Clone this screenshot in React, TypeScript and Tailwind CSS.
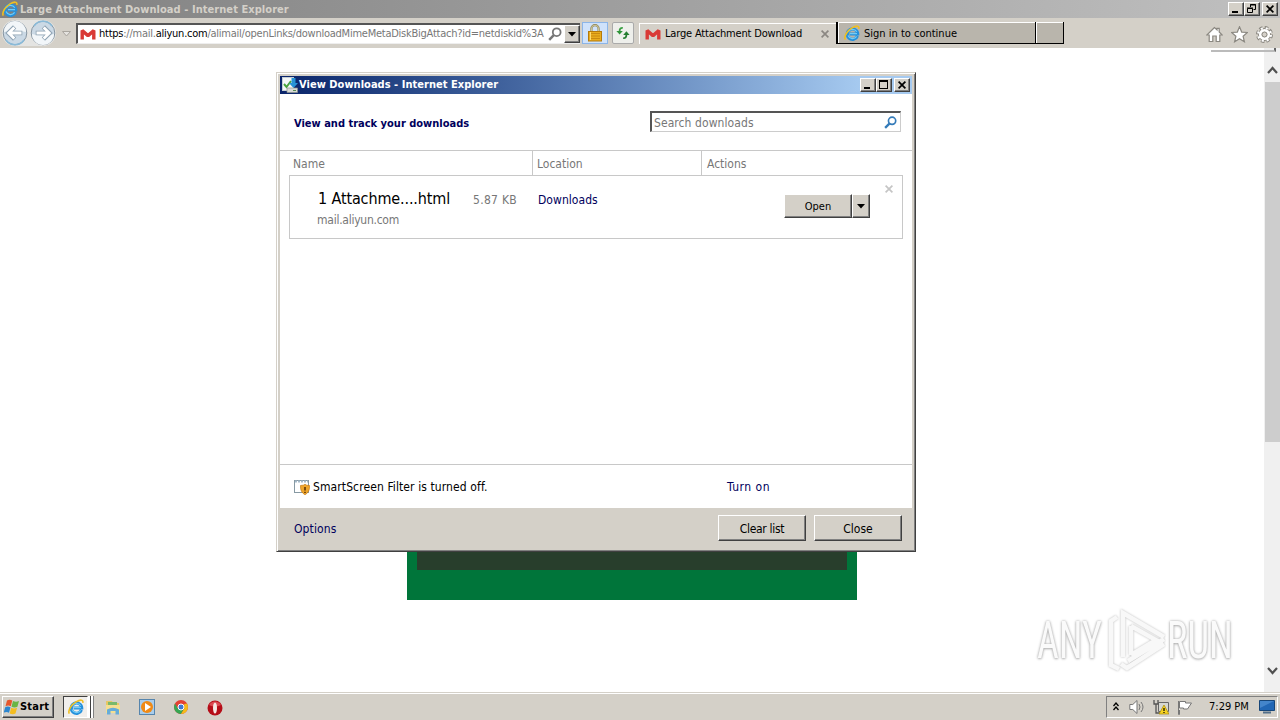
import React from 'react';

interface IconProps {
  className?: string;
}

const raised = 'bg-[#d4d0c8] border-t border-l border-t-white border-l-white border-r border-b border-r-[#404040] border-b-[#404040] shadow-[inset_-1px_-1px_0_#808080]';

const IeIcon = ({ className }: IconProps) => (
  <svg className={className} viewBox="0 0 16 16" fill="none">
    <path d="M13.4 10.9A5.200 5.200 0 1 1 13.7 9H5.600" stroke="#2590dc" strokeWidth="3.200" />
    <path d="M12.6 11.400A4.900 4.900 0 0 1 4 10.600M4.200 7A5 5 0 0 1 12.800 6.800M6 8.600h7" stroke="#72ccf6" strokeWidth="1.200" />
    <path d="M1.300 14.600C-.5 11.500 3.600 5.400 8 2.900 12 .6 15.500.3 14.800 3.800" stroke="#efbf22" strokeWidth="1.600" />
  </svg>
);

const MailIcon = ({ className }: IconProps) => (
  <svg className={className} viewBox="0 0 16 12" fill="none">
    <path d="M2.200 11.500V2.600L8 7.600l5.800-5v8.900" stroke="#d93a36" strokeWidth="3.400" strokeLinejoin="bevel" />
  </svg>
);

const NavArrow = ({ className }: IconProps) => (
  <svg className={className} viewBox="0 0 26 26" fill="none">
    <circle cx="13" cy="13" r="11.8" fill="#cbd9e5" stroke="#8795a1" />
    <path d="M2 12a11 11 0 0 1 22 0Q13 9 2 12Z" fill="#f2f6f9" />
    <path d="M4 20a11 11 0 0 0 18 0" stroke="#89bad8" strokeWidth="1.6" />
    <path d="M20.300 13H7.200M12.600 6.900 6.500 13l6.100 6.100" stroke="#8fa3b3" strokeWidth="4.600" />
    <path d="M19.500 13H7.400M12.300 7.400 6.700 13l5.600 5.600" stroke="#fff" strokeWidth="2.800" />
  </svg>
);

const Caret = ({ className }: IconProps) => (
  <svg className={className} viewBox="0 0 8 5">
    <path d="M0 0h8L4 4.5Z" fill="currentColor" />
  </svg>
);

const Magnifier = ({ className }: IconProps) => (
  <svg className={className} viewBox="0 0 14 14" fill="none" stroke="currentColor">
    <circle cx="8.7" cy="5.2" r="3.9" strokeWidth="1.8" />
    <path d="m5.8 8.2-4.6 4.6" strokeWidth="2.5" />
  </svg>
);

const Cross = ({ className }: IconProps) => (
  <svg className={className} viewBox="0 0 8 8" fill="none" stroke="currentColor" strokeWidth="1.7">
    <path d="m.6.6 6.8 6.8M7.4.6.6 7.4" />
  </svg>
);

const LockIcon = () => (
  <svg className="h-[18px] w-[14px]" viewBox="0 0 14 18" fill="none">
    <path d="M3.4 8V4.8a3.6 3.6 0 0 1 7.2 0V8" stroke="#8e8355" strokeWidth="2.2" />
    <path d="M3.4 8V4.8a3.6 3.6 0 0 1 7.2 0V8" stroke="#e2dcae" strokeWidth=".8" />
    <rect x=".5" y="7.5" width="13" height="9.5" fill="#e9ac1d" stroke="#b47a0c" />
    <path d="M2 9.5h10M2 12h10M2 14.500h10" stroke="#c98a10" />
    <path d="M2.500 8v8" stroke="#ffdc70" />
  </svg>
);

const RefreshIcon = () => (
  <svg className="h-[14px] w-[14px]" viewBox="0 0 14 14" fill="none">
    <path d="M6.800 1.800C4.500 1.600 3.600 3 3.600 5.200" stroke="#3ba044" strokeWidth="1.800" />
    <path d="M.4 5h6.400L3.600 8.600Z" fill="#2f9439" />
    <path d="M7.200 12.200c2.300.2 3.200-1.200 3.200-3.400" stroke="#257d30" strokeWidth="1.800" />
    <path d="M7.200 9h6.400l-3.200-3.800Z" fill="#257d30" />
  </svg>
);

const CaptionButtons = ({ restore }: { restore?: boolean }) => (
  <div className="flex">
    <div className={`flex h-[14px] w-4 items-end pb-[2px] pl-[3px] ${raised}`}>
      <div className="h-[2px] w-[6px] bg-black" />
    </div>
    <div className={`flex h-[14px] w-4 items-center justify-center ${raised}`}>
      {restore ? (
        <svg className="h-[10px] w-[10px]" viewBox="0 0 10 10" fill="none" stroke="#000">
          <path d="M3.500 3V.5h5v5H6.500M3 1h6M.5 4.500h5v4h-5zM0 4h6" />
        </svg>
      ) : (
        <div className="mr-px mb-px h-[9px] w-[9px] border border-t-2 border-black" />
      )}
    </div>
    <div className={`ml-[2px] flex h-[14px] w-4 items-center justify-center ${raised}`}>
      <Cross className="h-2 w-2 text-black" />
    </div>
  </div>
);

const Toolbar = () => (
  <div className="flex h-[30px] bg-[#d4d0c8] text-[11px]">
    <div className="mt-[2px] ml-[2px] flex h-[26px] w-[54px] rounded-full bg-[#e4e4e2]">
      <NavArrow className="h-[26px] w-[26px]" />
      <NavArrow className="ml-[2px] h-[26px] w-[26px] rotate-180" />
    </div>
    <svg className="mt-[13px] ml-[6px] h-[6px] w-[9px]" viewBox="0 0 9 6">
      <path d="M.5.5h8l-4 4.500Z" fill="#e5e3df" stroke="#aaa69f" />
    </svg>
    <div className="mt-[5px] ml-[5px] flex h-[21px] w-[504px] items-center border-t-2 border-l-2 border-[#555] border-b border-b-[#eee] bg-white">
      <MailIcon className="ml-[2px] h-3 w-4" />
      <div className="ml-[3px] w-[447px] pt-px whitespace-nowrap tracking-[-0.245px] text-[#777]">
        <span className="text-black">https</span>://mail.<span className="text-black">aliyun.com</span>/alimail/openLinks/downloadMimeMetaDiskBigAttach?id=netdiskid%3A
      </div>
      <Magnifier className="ml-[2px] h-[14px] w-[14px] text-[#777]" />
      <div className={`ml-[2px] flex h-[18px] w-4 items-center justify-center ${raised}`}>
        <Caret className="h-[5px] w-2 text-black" />
      </div>
    </div>
    <div className="mt-[4px] ml-[2px] flex h-[22px] w-[26px] items-center justify-center border border-[#8cb5e8] bg-[#cfe2fb]">
      <LockIcon />
    </div>
    <div className="mt-[4px] ml-[4px] flex h-[22px] w-[22px] items-center justify-center rounded-[2px] border border-[#aaa] bg-[#eeefeb]">
      <RefreshIcon />
    </div>
    <div className="mt-[5px] ml-[5px] flex h-[21px] w-[197px] items-center border-t border-l border-white">
      <MailIcon className="ml-[5px] h-3 w-4" />
      <span className="ml-[4px] w-[152px] pt-px tracking-[-0.17px] whitespace-nowrap">Large Attachment Download</span>
      <Cross className="ml-[4px] h-2 w-2 text-[#8b8782]" />
    </div>
    <div className="mt-[4px] flex h-[22px] w-[200px] items-center border-b border-l-2 border-r border-black bg-[#b9b5ac] shadow-[inset_1px_1px_0_#fff]">
      <IeIcon className="ml-[6px] h-4 w-4" />
      <span className="ml-[4px] pt-[3px] whitespace-nowrap">Sign in to continue</span>
    </div>
    <div className="mt-[4px] h-[22px] w-[28px] border-b border-r border-black bg-[#b9b5ac] shadow-[inset_1px_1px_0_#fff]" />
    <div className="mt-[8px] ml-auto flex gap-[8px] pr-[7px]">
      <svg className="h-[17px] w-[17px]" viewBox="0 0 17 17" fill="#fff" stroke="#8b8881" strokeWidth="1.200">
        <path d="M8.500 1.500.8 9h2.400v6.500h3.600V10h3.400v5.500h3.600V9h2.400l-3-3V2.300h-2.200v1.600Z" />
      </svg>
      <svg className="h-[17px] w-[17px]" viewBox="0 0 17 17" fill="#fff" stroke="#8b8881" strokeWidth="1.200">
        <path d="m8.500.8 2.200 5.300 5.700.4-4.300 3.700 1.300 5.600-4.900-3-4.900 3 1.300-5.600L.6 6.500l5.700-.4Z" />
      </svg>
      <svg className="h-[17px] w-[17px]" viewBox="0 0 17 17" fill="none">
        <circle cx="8.500" cy="8.500" r="6.900" stroke="#8b8881" strokeWidth="3.200" strokeDasharray="3.400 2.019" />
        <circle cx="8.500" cy="8.500" r="4.700" stroke="#8b8881" strokeWidth="3.600" />
        <circle cx="8.500" cy="8.500" r="6.400" stroke="#fff" strokeWidth="2.200" strokeDasharray="2 3.027" strokeDashoffset="-.5" />
        <circle cx="8.500" cy="8.500" r="4.200" stroke="#fff" strokeWidth="2.800" />
        <circle cx="8.500" cy="8.500" r="2.500" fill="#d4d0c8" stroke="#8b8881" />
      </svg>
    </div>
  </div>
);

const Scrollbar = () => (
  <div className="flex w-4 flex-col items-center bg-[#f0f0f0]">
    <svg className="mt-[18px] h-2 w-[11px]" viewBox="0 0 11 8" fill="none">
      <path d="m1 7 4.500-5L10 7" stroke="#505050" strokeWidth="2.200" />
    </svg>
    <div className="mt-[8px] h-[360px] w-[15px] bg-[#cdcdcd]" />
    <svg className="mt-auto mb-[17px] h-2 w-[11px]" viewBox="0 0 11 8" fill="none">
      <path d="m1 1 4.500 5L10 1" stroke="#505050" strokeWidth="2.200" />
    </svg>
  </div>
);

const DownloadsWindow = () => (
  <div className="absolute top-[72px] left-[276px] flex h-[480px] w-[640px] flex-col border border-t-[#d4d0c8] border-l-[#d4d0c8] border-r-[#404040] border-b-[#404040] bg-[#d4d0c8] p-[3px] text-[12px] shadow-[inset_1px_1px_0_#fff,inset_-1px_-1px_0_#808080]">
    <div className="flex h-[18px] shrink-0 items-center bg-linear-to-r from-[#0a246a] to-[#a6caf0] to-92% pr-[2px]">
      <svg className="ml-[2px] h-4 w-4" viewBox="0 0 16 16">
        <rect x=".5" y=".5" width="11" height="13" fill="#f4f7f8" stroke="#c6cfd4" />
        <path d="m2 7 2.500 3L9 4" fill="none" stroke="#49a43d" strokeWidth="2" />
        <path d="M9.500 1h4v5H16l-4.500 5L7 6h2.500Z" fill="#2793d6" />
        <path d="M5 11h10.500v4.500H5Z" fill="#d8d9d4" stroke="#8c928e" strokeWidth=".7" />
        <path d="M11 13.500h3" stroke="#578b54" />
      </svg>
      <span className="ml-[1px] pt-px text-[11px] font-bold tracking-[0.03px] whitespace-nowrap text-white">View Downloads - Internet Explorer</span>
      <div className="ml-auto"><CaptionButtons /></div>
    </div>
    <div className="flex h-[414px] shrink-0 flex-col bg-white">
      <div className="flex h-[56px] shrink-0 justify-between pr-[11px] pl-[14px]">
        <h1 className="mt-[23px] text-[11px] leading-[14px] font-bold whitespace-nowrap text-[#00005c]">View and track your downloads</h1>
        <div className="mt-[17px] flex h-[21px] w-[251px] items-center justify-between border-t-2 border-l-2 border-r border-b border-t-[#555] border-l-[#555] border-r-[#ccc] border-b-[#ccc] pr-[3px] pl-[2px] text-[#777]">
          <span className="pt-px tracking-[0.08px]">Search downloads</span>
          <Magnifier className="h-[13px] w-[13px] text-[#347bb9]" />
        </div>
      </div>
      <div className="flex h-[25px] shrink-0 items-center border-t border-[#c8c8c8] text-[#777]">
        <div className="w-[252px] pt-[2px] pl-[13px]">Name</div>
        <div className="flex h-full w-[169px] items-center border-l border-[#c8c8c8] pt-px pl-[4px]">Location</div>
        <div className="flex h-full items-center border-l border-[#c8c8c8] pt-px pl-[5px]">Actions</div>
      </div>
      <div className="ml-[9px] flex h-[64px] w-[614px] shrink-0 border border-[#c8c8c8]">
        <div className="w-[183px] pt-[13px] pl-[27px] whitespace-nowrap">
          <div className="pl-px text-[16px] leading-[20px] tracking-[-0.13px]">1 Attachme....html</div>
          <div className="mt-[3px] leading-[16px] tracking-[-0.25px] text-[#777]">mail.aliyun.com</div>
        </div>
        <div className="w-[65px] pt-[16px] leading-[16px] tracking-[0.3px] whitespace-nowrap text-[#777]">5.87 KB</div>
        <div className="w-[246px] pt-[16px] leading-[16px] tracking-[0.05px] text-[#00005c]">Downloads</div>
        <div className={`mt-[18px] flex h-[24px] w-[68px] items-center justify-center pt-[3px] text-[11px] ${raised}`}>Open</div>
        <div className={`mt-[18px] flex h-[24px] w-[18px] items-center justify-center ${raised}`}>
          <Caret className="h-[5px] w-2 text-black" />
        </div>
        <Cross className="mt-[9px] ml-[15px] h-2 w-2 text-[#c5c5c5]" />
      </div>
      <div className="mt-auto flex h-[44px] shrink-0 items-center border-t border-[#c8c8c8] pl-[14px] whitespace-nowrap">
        <svg className="h-4 w-4" viewBox="0 0 16 16">
          <rect x=".5" y="1.500" width="14" height="12" fill="#fff" stroke="#8799a3" />
          <path d="M1 2.500h13" stroke="#a5bac9" strokeWidth="2" strokeDasharray="2 1" />
          <path d="M6.500 6.500q3.500 0 4.500-1.200 1 1.200 4.500 1.200.5 6.500-4.500 9.300-5-2.800-4.500-9.300Z" fill="#efa62b" stroke="#c57a12" strokeWidth=".7" />
          <path d="M11 8v3.500M11 12.700V14" stroke="#4b2500" strokeWidth="1.400" />
        </svg>
        <span className="ml-[3px] w-[414px] tracking-[0.1px]">SmartScreen Filter is turned off.</span>
        <span className="tracking-[0.5px] text-[#00005c]">Turn on</span>
      </div>
    </div>
    <div className="flex grow items-center pr-[10px] pl-[14px]">
      <span className="mr-auto pt-[2px] tracking-[0.1px] text-[#00005c]">Options</span>
      <div className={`flex h-[26px] w-[88px] items-center justify-center pt-[2px] tracking-[-0.3px] ${raised}`}>Clear list</div>
      <div className={`ml-[8px] flex h-[26px] w-[88px] items-center justify-center pt-[2px] ${raised}`}>Close</div>
    </div>
  </div>
);

const Watermark = () => (
  <div className="absolute top-[609px] left-[1037px] flex h-[64px] w-[198px] items-center font-['Roboto'] text-[52px] leading-none text-[#fafafa] [text-shadow:0_0_3px_#aaa,0_1px_3px_#bbb]">
    <span className="w-[68px] shrink-0 origin-left scale-x-[0.73] whitespace-nowrap">ANY</span>
    <svg className="h-[64px] w-[62px] shrink-0 drop-shadow-[0_0_1px_#bbb]" viewBox="0 0 62 64" fill="none" stroke="#f8f8f8" strokeWidth="4.500">
      <path d="M18 48V4l41 24M23 52l36-22M26 17v29M26 17l25 14-25 15M12 8l-6 4v44l8 4M59 35 22 59l-6-4" />
    </svg>
    <span className="w-[66px] shrink-0 origin-left scale-x-[0.74] whitespace-nowrap">RUN</span>
  </div>
);

const Taskbar = () => (
  <div className="flex h-[28px] border-t border-[#d4d0c8] bg-[#d4d0c8] text-[11px] shadow-[inset_0_1px_0_#fff]">
    <div className={`mt-[3px] ml-[2px] flex h-[22px] w-[52px] items-center pl-px font-bold ${raised}`}>
      <svg className="h-4 w-4 shrink-0" viewBox="0 0 16 16">
        <path d="M3 1.500q2.500-1.500 5.300 0L6.800 7.200q-2.500-1.500-5.300 0Z" fill="#e6572c" />
        <path d="M9 2q3 1.500 6 0L13.400 7.700q-2.700 1.500-5.900 0Z" fill="#69b544" />
        <path d="M1.200 8.200q2.500-1.500 5.300 0L5 13.700q-2.500-1.500-5.300 0Z" fill="#2c86cf" />
        <path d="M7.200 8.700q2.800 1.500 5.900 0L11.500 14.400q-2.500 1.500-5.800 0Z" fill="#f4bd20" />
      </svg>
      <span className="pt-px tracking-[0.2px]">Start</span>
    </div>
    <div className="mt-[3px] ml-[9px] flex h-[22px] w-[25px] items-center justify-center border border-t-[#404040] border-l-[#404040] border-r-white border-b-white bg-[#f1efec]">
      <IeIcon className="h-[16px] w-[16px]" />
    </div>
    <div className="mt-[3px] h-[22px] w-[3px] border-r border-[#404040] bg-white" />
    <div className="mt-[3px] h-[22px] w-[3px] border-r border-[#808080] bg-white" />
    <svg className="mt-[6px] ml-[11px] h-4 w-4" viewBox="0 0 16 16">
      <path d="M1 2h6l1 2h6v9H1Z" fill="#e8c765" />
      <path d="M3 3h9v3H3Z" fill="#79b96b" />
      <path d="M1 6h14v8H1Z" fill="#f5df91" />
      <path d="M2 15.500v-5q6-3.500 12 0v5h-3.500V12h-5v3.500Z" fill="#66acd9" />
    </svg>
    <svg className="mt-[6px] ml-[18px] h-4 w-4" viewBox="0 0 16 16">
      <rect x=".5" y=".5" width="15" height="15" fill="#a9cdec" stroke="#5685ad" />
      <circle cx="8" cy="8" r="6" fill="#f08a16" />
      <path d="m6 4 6 4-6 4Z" fill="#fff" />
    </svg>
    <svg className="mt-[7px] ml-[19px] h-[14px] w-[14px]" viewBox="0 0 14 14">
      <circle cx="7" cy="7" r="7" fill="#e34133" />
      <path d="M1 3.500A7 7 0 0 0 7 14l3-5.200H4Z" fill="#35a653" />
      <path d="M13 3.600A7 7 0 0 1 7 14l3.200-5.300V4Z" fill="#f4bd19" />
      <circle cx="7" cy="7" r="3" fill="#3d78d4" stroke="#fff" />
    </svg>
    <svg className="mt-[7px] ml-[19px] h-4 w-4" viewBox="0 0 16 16">
      <circle cx="8" cy="8" r="7.500" fill="#b50d18" />
      <path d="M2 5a7 7 0 0 1 12 0Q8 8 2 5Z" fill="#db4951" />
      <ellipse cx="8" cy="8" rx="2" ry="5.500" fill="#f5e9e5" />
    </svg>
    <div className="mt-[3px] mr-[2px] ml-auto flex h-[22px] w-[172px] items-center border border-t-[#808080] border-l-[#808080] border-r-white border-b-white">
      <svg className="mb-[2px] ml-[6px] h-[9px] w-[6px]" viewBox="0 0 6 9" fill="none" stroke="#000" strokeWidth="1.300">
        <path d="m.5 4 2.500-3 2.500 3M.5 8 3 5l2.500 3" />
      </svg>
      <svg className="ml-[10px] h-4 w-4" viewBox="0 0 16 16" fill="#fff" stroke="#777">
        <path d="M.8 5.500h3L8 1.500v13l-4.200-4h-3Z" />
        <path d="M10 5q2 3 0 6M12 3q4 5 0 10" fill="none" />
      </svg>
      <svg className="ml-[8px] h-4 w-4" viewBox="0 0 16 16">
        <path d="M5.500 3.500h10v9h-10Z" fill="#d6d7d2" stroke="#666" />
        <path d="M1 1v4h4V1M3 5v9h4" fill="none" stroke="#555" strokeWidth="1.300" />
        <path d="m11 6 5 9H6Z" fill="#f7d321" stroke="#a68706" strokeWidth=".7" />
        <path d="M11 9v3M11 13v1" stroke="#000" strokeWidth="1.200" />
      </svg>
      <svg className="ml-[8px] h-[15px] w-4" viewBox="0 0 16 15" fill="#fff" stroke="#777">
        <path d="M1.500 1v13.500h1V10M2.500 1.500h6v1.500h6l-2 3 -2 3h-4V8h-4Z" />
      </svg>
      <span className="ml-[16px] pt-px whitespace-nowrap">7:29 PM</span>
      <svg className="mr-[2px] ml-auto h-[14px] w-[16px]" viewBox="0 0 16 14">
        <path d="M.5.5h15v10H.5Z" fill="#2267b5" stroke="#174679" />
        <path d="M1 1h14L1 8Z" fill="#4485cb" />
        <path d="M4 12.500h8" stroke="#536f89" strokeWidth="2" />
      </svg>
    </div>
  </div>
);

export default function App() {
  return (
    <div className="relative flex h-[720px] w-[1280px] flex-col overflow-hidden bg-white font-['DejaVu_Sans_Condensed','DejaVu_Sans',sans-serif] text-black [font-stretch:condensed]">
      <div className="flex h-[18px] items-center bg-linear-to-r from-[#808080] to-[#c0c0c0] pr-[2px] pl-[2px]">
        <IeIcon className="h-4 w-4" />
        <span className="ml-[2px] pt-[2px] text-[11px] font-bold tracking-[0.06px] whitespace-nowrap text-[#d4d0c8]">Large Attachment Download - Internet Explorer</span>
        <div className="ml-auto"><CaptionButtons restore /></div>
      </div>
      <Toolbar />
      <div className="flex h-[644px] justify-end">
        <div className="flex w-[1264px] justify-center">
          <div className="mt-[452px] h-[100px] w-[450px] bg-[#00753a] px-[10px]">
            <div className="h-[70px] bg-[#283e2c]" />
          </div>
        </div>
        <Scrollbar />
      </div>
      <Taskbar />
      <div className="absolute top-[48px] left-[1211px] h-[4px] w-[65px] border-r-2 border-b-2 border-[#bbb] border-r-[#666]" />
      <DownloadsWindow />
      <Watermark />
    </div>
  );
}
